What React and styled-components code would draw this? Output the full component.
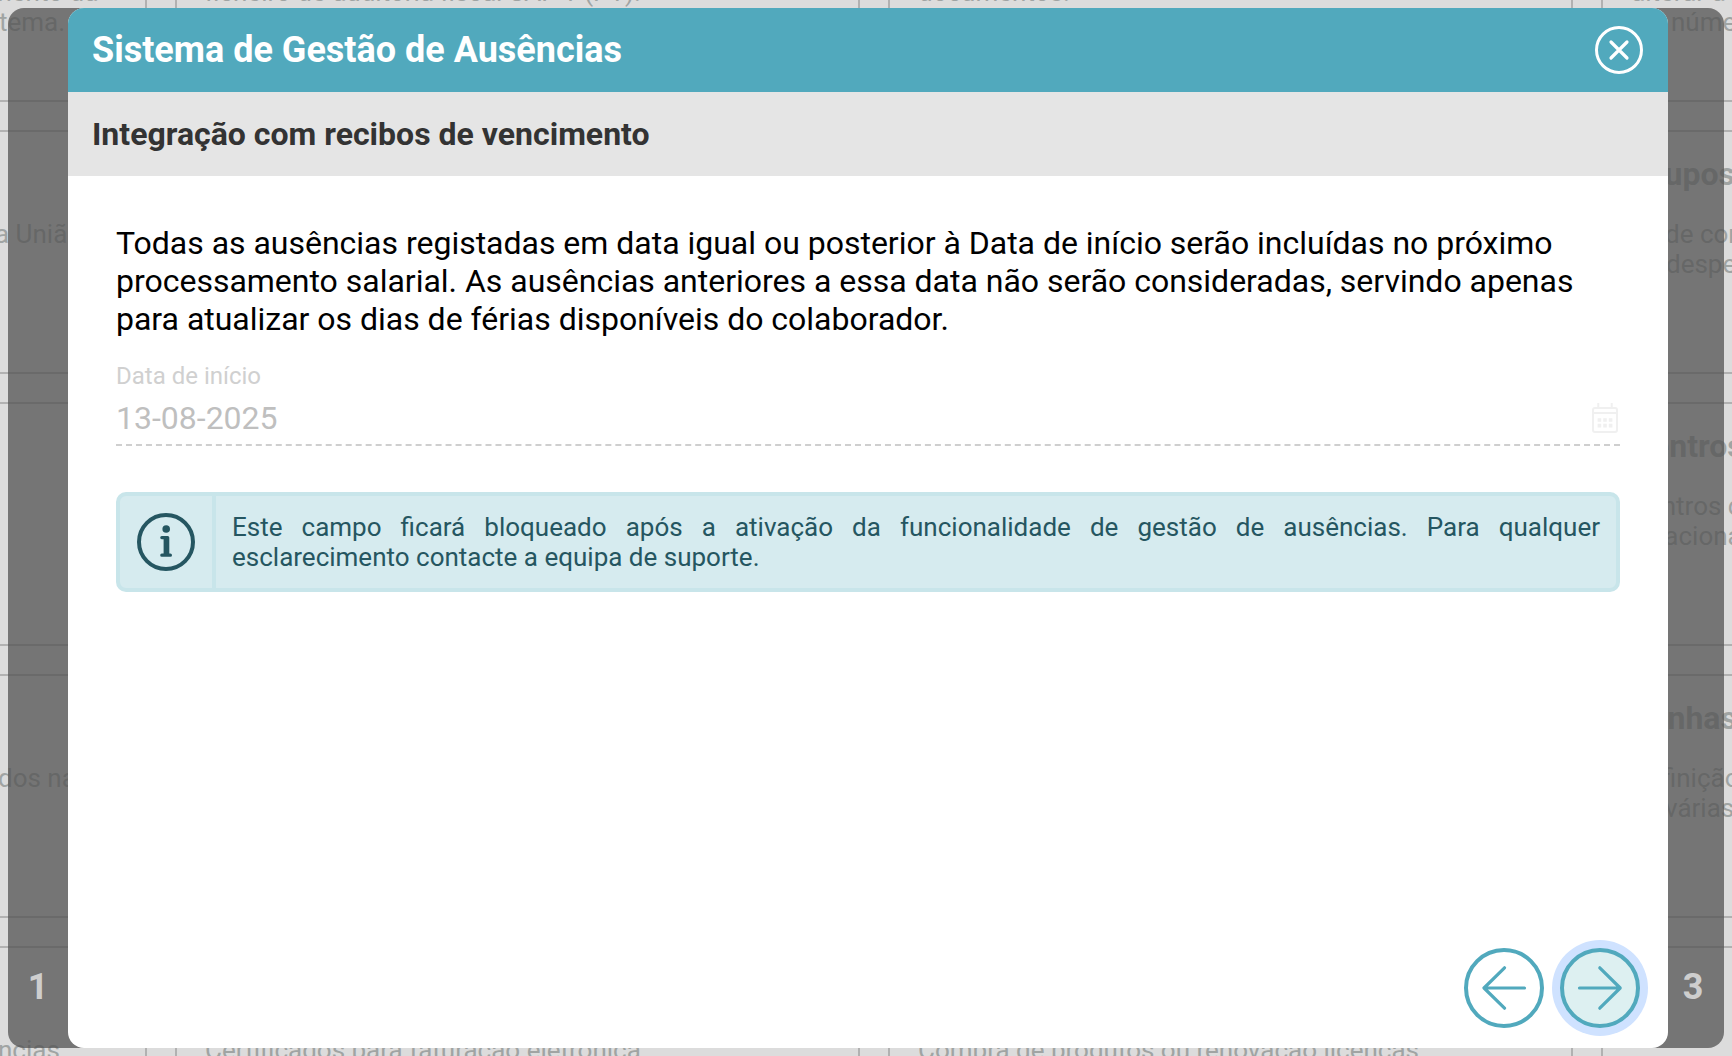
import React from 'react'
import styled, { createGlobalStyle } from 'styled-components';

const GlobalStyle = createGlobalStyle`
    * {
        box-sizing: border-box;
    }
    body {
        margin: 0;
        overflow: hidden;
        font-family: Roboto, "Liberation Sans", sans-serif;
    }
    h1, h2, h3, p {
        margin: 0;
    }
    button {
        padding: 0;
        border: 0;
        background: none;
        cursor: pointer;
    }
`;

const Page = styled.div`
    position: relative;
    width: 100vw;
    height: 100vh;
    overflow: hidden;
    background-color: #dcdcdc;
`;

const Grid = styled.div`
    display: grid;
    grid-template-columns: repeat(4, 685px);
    grid-auto-rows: 244px;
    gap: 28px;
    width: 2824px;
    margin: -142px 0 0 -538px;
`;

const Card = styled.section`
    padding: 23px 28px;
    border: 2px solid #b1b1b1;
    white-space: nowrap;
    overflow: hidden;
`;

const CardTitle = styled.h3`
    height: 38px;
    font-size: 32px;
    line-height: 38px;
    color: #a0a4a3;
`;

const CardText = styled.div`
    margin-top: 26px;
    font-size: 26px;
    line-height: 30px;
    color: #a0a4a3;
`;

const CardLine = styled.div`
    height: 30px;
    text-indent: ${props => props.$indent || 0}px;
`;

const Overlay = styled.div`
    position: absolute;
    top: 8px;
    right: 8px;
    bottom: 8px;
    left: 8px;
    display: grid;
    grid-template-columns: 60px 1600px 1fr;
    border-radius: 16px;
    background-color: rgba(83, 83, 83, .75);
`;

const Step = styled.div`
    display: flex;
    align-items: flex-end;
    justify-content: center;
    padding-bottom: 40px;
    font-size: 36px;
    font-weight: 700;
    line-height: 42px;
    color: #cecece;
    &:last-child {
        padding-right: 6px;
    }
`;

const Dialog = styled.div`
    display: flex;
    flex-direction: column;
    border-radius: 16px;
    background-color: #fff;
    overflow: hidden;
`;

const Header = styled.header`
    display: flex;
    align-items: center;
    justify-content: space-between;
    height: 84px;
    padding: 0 25px 0 24px;
    background-color: #51a9bd;
`;

const Title = styled.h1`
    font-size: 36px;
    font-weight: 700;
    line-height: 42px;
    color: #fff;
`;

const CloseButton = styled.button`
    width: 48px;
    height: 48px;
    svg {
        display: block;
    }
`;

const SubHeader = styled.div`
    display: flex;
    align-items: center;
    height: 84px;
    padding: 0 24px;
    background-color: #e5e5e5;
`;

const SubTitle = styled.h2`
    font-size: 32px;
    font-weight: 700;
    line-height: 38px;
    color: #333;
`;

const Body = styled.div`
    flex: 1;
    padding: 48px;
`;

const Description = styled.p`
    font-size: 32px;
    line-height: 38px;
    letter-spacing: -.012px;
    color: #000;
`;

const Field = styled.div`
    height: 108px;
    padding-top: 24px;
    border-bottom: 2px dashed #cfcfcf;
`;

const Label = styled.div`
    font-size: 24px;
    line-height: 28px;
    color: #d0d0d0;
`;

const Value = styled.div`
    display: flex;
    align-items: center;
    justify-content: space-between;
    height: 56px;
    padding-right: 2px;
    font-size: 32px;
    color: #bfbfbf;
`;

const Notice = styled.div`
    display: flex;
    height: 100px;
    margin-top: 46px;
    border: 4px solid #c8e5ea;
    border-radius: 10px;
    background-color: #d6ebef;
`;

const NoticeIcon = styled.div`
    display: flex;
    align-items: center;
    justify-content: center;
    width: 96px;
    border-right: 4px solid #c8e5ea;
`;

const NoticeText = styled.p`
    flex: 1;
    padding: 16px;
    font-size: 26px;
    line-height: 30px;
    text-align: justify;
    color: #255661;
`;

const Footer = styled.footer`
    display: flex;
    justify-content: flex-end;
    gap: 16px;
    padding: 0 28px 20px;
`;

const RoundButton = styled.button`
    display: flex;
    align-items: center;
    justify-content: center;
    width: 80px;
    height: 80px;
    border: 4px solid #51a9bd;
    border-radius: 50%;
    background-color: ${props => props.$active ? '#ddf0f1' : '#fff'};
    box-shadow: ${props => props.$active ? '0 0 0 8px #cfe2ff' : 'none'};
`;

const cards = [
    { lines: [{}, { text: 'mento da', indent: 497 }, { text: 'tema.', indent: 507 }] },
    { lines: [{}, { text: 'ficheiro de auditoria fiscal SAF-T (PT).' }] },
    { lines: [{}, { text: 'documentos.' }] },
    { lines: [{}, { text: 'alterar a' }, { text: 'número', indent: 40 }] },

    { lines: [{ text: 'a União', indent: 503 }] },
    {},
    {},
    { title: 'Grupos', lines: [{ text: 'de contas', indent: 34 }, { text: 'despesas', indent: 35 }] },

    {},
    {},
    {},
    { title: 'Centros', lines: [{ text: 'Centros de' }, { text: 'nacionais', indent: 19 }] },

    { lines: [{ text: 'dos na', indent: 506 }] },
    {},
    {},
    { title: 'Minhas', lines: [{ text: 'Definição' }, { text: 'várias', indent: 34 }] },

    { lines: [{ text: 'ncias', indent: 506 }] },
    { lines: [{ text: 'Certificados para faturação eletrónica' }] },
    { lines: [{ text: 'Compra de produtos ou renovação licenças' }] },
    {},
];

const CloseIcon = () => (
    <svg width="48" height="48" viewBox="0 0 48 48" fill="none" stroke="#fff" strokeLinecap="round">
        <circle cx="24" cy="24" r="22.5" strokeWidth="3" />
        <path d="M16 16l16 16M32 16L16 32" strokeWidth="3.2" />
    </svg>
)

const CalendarIcon = () => (
    <svg width="26" height="30" viewBox="0 0 26 30" fill="none" stroke="#f0f0f0" strokeWidth="2">
        <rect x="1" y="5" width="24" height="24" rx="2" />
        <path d="M1 10h24M6.3 0v5M19.7 0v5" />
        <path d="M5.6 17h3.6M11.2 17h3.6M16.8 17h3.6M5.6 22.6h3.6M11.2 22.6h3.6M16.8 22.6h3.6" strokeWidth="3.6" />
    </svg>
)

const InfoIcon = () => (
    <svg width="58" height="58" viewBox="0 0 58 58" fill="none" stroke="#255661">
        <circle cx="29" cy="29" r="27" strokeWidth="4" />
        <circle cx="29.2" cy="16" r="3.8" fill="#255661" stroke="none" />
        <path d="M24.8 24.6h5.9v17.6M24.8 42.2h8.6" strokeWidth="3.2" strokeLinecap="round" strokeLinejoin="round" />
        <path d="M29.3 25v17" strokeWidth="5.4" />
    </svg>
)

const ArrowLeft = () => (
    <svg width="48" height="48" viewBox="0 0 48 48" fill="none" stroke="#51a9bd" strokeWidth="3.2" strokeLinecap="round" strokeLinejoin="round">
        <path d="M44.5 24H4.2M24.5 3.8L4 24l20.5 20.2" />
    </svg>
)

const ArrowRight = () => (
    <svg width="48" height="48" viewBox="0 0 48 48" fill="none" stroke="#51a9bd" strokeWidth="3.2" strokeLinecap="round" strokeLinejoin="round">
        <path d="M3.5 24h40.3M23.8 3.8L44.2 24 23.8 44.2" />
    </svg>
)

export default function App() {
    return (
        <Page>
            <GlobalStyle />
            <Grid>
                {
                    cards.map((card, i) => (
                        <Card key={i}>
                            <CardTitle>{card.title}</CardTitle>
                            <CardText>
                                {(card.lines || []).map((line, j) => (
                                    <CardLine key={j} $indent={line.indent}>{line.text}</CardLine>
                                ))}
                            </CardText>
                        </Card>
                    ))
                }
            </Grid>
            <Overlay>
                <Step>1</Step>
                <Dialog>
                    <Header>
                        <Title>Sistema de Gestão de Ausências</Title>
                        <CloseButton aria-label="Fechar"><CloseIcon /></CloseButton>
                    </Header>
                    <SubHeader>
                        <SubTitle>Integração com recibos de vencimento</SubTitle>
                    </SubHeader>
                    <Body>
                        <Description>
                            Todas as ausências registadas em data igual ou posterior à Data de início serão incluídas no próximo
                            processamento salarial. As ausências anteriores a essa data não serão consideradas, servindo apenas
                            para atualizar os dias de férias disponíveis do colaborador.
                        </Description>
                        <Field>
                            <Label>Data de início</Label>
                            <Value>
                                <span>13-08-2025</span>
                                <CalendarIcon />
                            </Value>
                        </Field>
                        <Notice>
                            <NoticeIcon><InfoIcon /></NoticeIcon>
                            <NoticeText>
                                Este campo ficará bloqueado após a ativação da funcionalidade de gestão de ausências. Para qualquer
                                esclarecimento contacte a equipa de suporte.
                            </NoticeText>
                        </Notice>
                    </Body>
                    <Footer>
                        <RoundButton aria-label="Anterior"><ArrowLeft /></RoundButton>
                        <RoundButton aria-label="Seguinte" $active><ArrowRight /></RoundButton>
                    </Footer>
                </Dialog>
                <Step>3</Step>
            </Overlay>
        </Page>
    )
}
